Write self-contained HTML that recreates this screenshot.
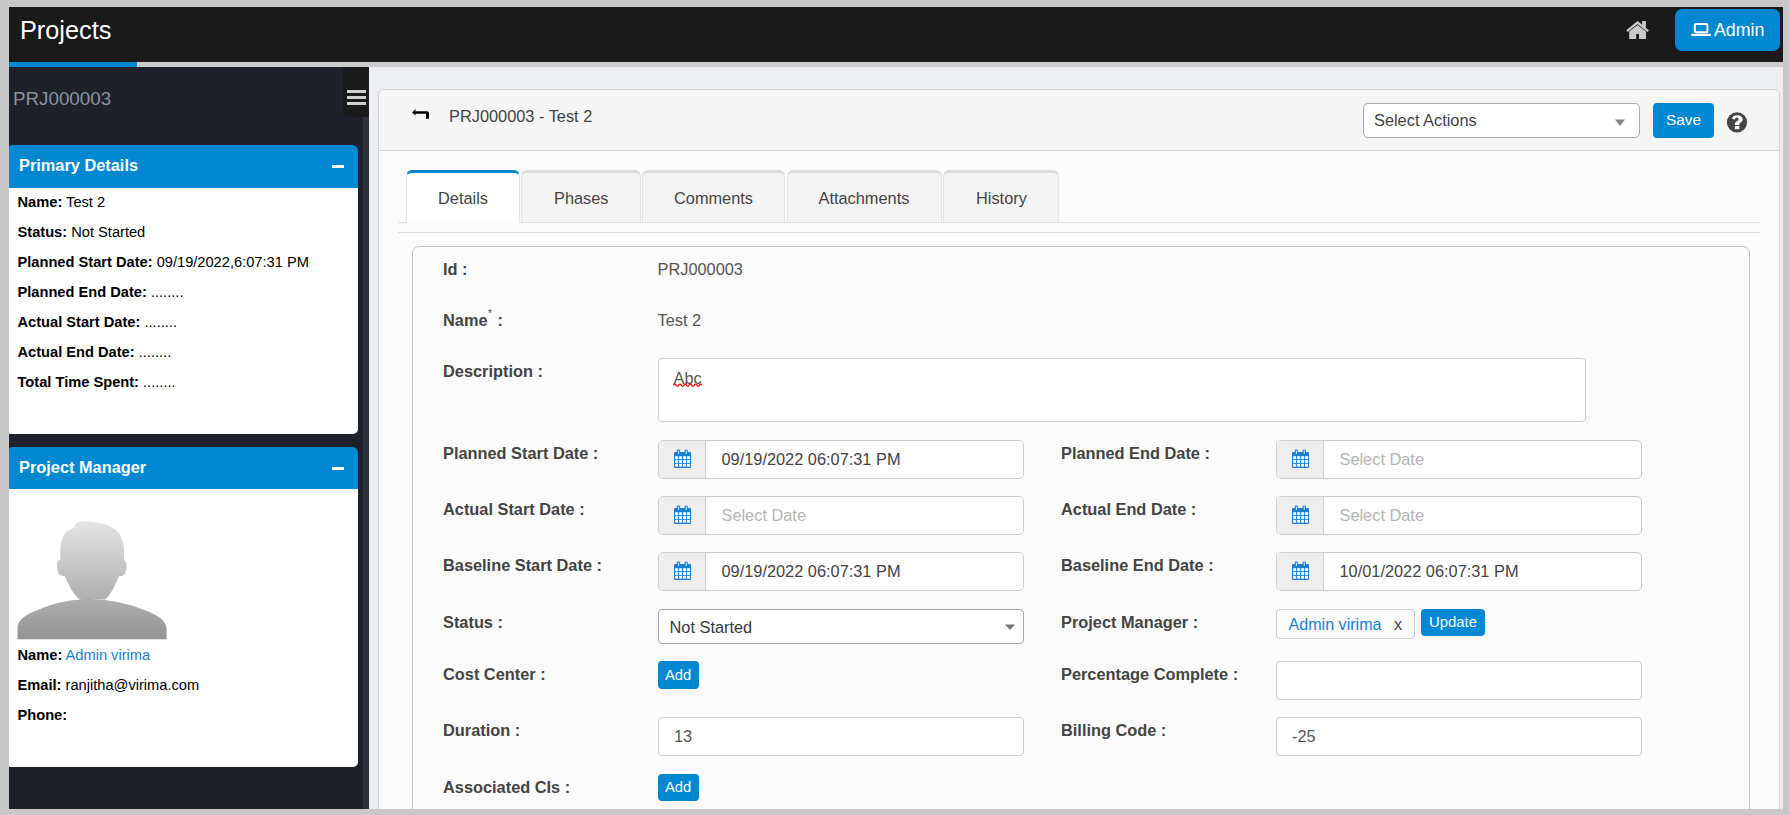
<!DOCTYPE html>
<html><head><meta charset="utf-8">
<style>
*{box-sizing:border-box;margin:0;padding:0}
html,body{width:1789px;height:815px;overflow:hidden;background:#c8c8c8;font-family:"Liberation Sans",sans-serif}
.a{position:absolute}
.t{position:absolute;white-space:nowrap;line-height:1}
.inp{position:absolute;background:#fff;border:1px solid #cdcdcd;border-radius:4px}
.btn{position:absolute;background:#0288d1}
.tab{position:absolute;top:170px;height:52px;background:#f4f4f4;border-top:3px solid #dcdcdc;border-left:1px solid #e6e6e6;border-right:1px solid #e6e6e6;border-radius:6px 6px 0 0}
.dg{position:absolute;height:39px;width:366px;background:#fff;border:1px solid #cdcdcd;border-radius:5px;overflow:hidden}
.dg .ad{position:absolute;left:0;top:0;width:47px;height:37px;background:#eeeeee;border-right:1px solid #cdcdcd}
.dg svg{position:absolute;left:15px;top:8px}
</style></head><body>
<div class="a" style="left:9px;top:7px;width:1774px;height:55px;background:#1a1a1a"></div>
<div class="t" style="left:20px;top:18px;font-size:25.3px;color:#fff;">Projects</div>
<svg class="a" style="left:1620px;top:15px" width="40" height="30" viewBox="0 0 40 30">
<polyline points="7,16.2 17.5,7.6 28.2,16.2" fill="none" stroke="#c8c8c8" stroke-width="2.3"/>
<rect x="22.1" y="6" width="3.8" height="6.5" fill="#c8c8c8"/>
<polygon points="9.2,16.6 17.5,10 26,16.6 26,24 19,24 19,19 16.2,19 16.2,24 9.2,24" fill="#c8c8c8"/>
</svg>
<div class="a" style="left:1675px;top:9px;width:105px;height:42px;background:#0288d1;border-radius:7px"></div>
<svg class="a" style="left:1685px;top:15px" width="40" height="30" viewBox="0 0 40 30">
<rect x="9.8" y="8.9" width="12.6" height="8.3" rx="1.2" fill="none" stroke="#fff" stroke-width="2"/>
<rect x="6.1" y="18.8" width="20" height="2.2" rx="1" fill="#fff"/>
</svg>
<div class="t" style="left:1714px;top:22px;font-size:17.8px;color:#fff;">Admin</div>
<div class="a" style="left:9px;top:62px;width:1774px;height:5px;background:#cccccc"></div>
<div class="a" style="left:9px;top:62px;width:128px;height:5px;background:#0288d1"></div>
<div class="a" style="left:9px;top:67px;width:360px;height:742px;background:#1e2129"></div>
<div class="a" style="left:363px;top:67px;width:6px;height:742px;background:#2c2f37"></div>
<div class="a" style="left:343px;top:67px;width:26px;height:50px;background:#1a1a1a;border-bottom-left-radius:6px"></div>
<div class="a" style="left:346.5px;top:89.8px;width:19px;height:3.3px;background:#cfcfcf"></div>
<div class="a" style="left:346.5px;top:95.9px;width:19px;height:3.3px;background:#cfcfcf"></div>
<div class="a" style="left:346.5px;top:101.8px;width:19px;height:3.3px;background:#cfcfcf"></div>
<div class="t" style="left:13px;top:90px;font-size:18.8px;color:#8c929c;">PRJ000003</div>
<div class="a" style="left:9px;top:145px;width:349px;height:43px;background:#0288d1;border-radius:3px 6px 0 0"></div>
<div class="t" style="left:19px;top:157px;font-size:16.35px;color:#fff;font-weight:bold;">Primary Details</div>
<div class="a" style="left:332px;top:165px;width:12px;height:2.5px;background:#fff"></div>
<div class="a" style="left:9px;top:188px;width:349px;height:245.5px;background:#fff;border-radius:0 0 5px 1px"></div>
<div class="t" style="left:17.5px;top:195px;font-size:14.65px;color:#000;"><b>Name:</b> Test 2</div>
<div class="t" style="left:17.5px;top:225px;font-size:14.65px;color:#000;"><b>Status:</b> Not Started</div>
<div class="t" style="left:17.5px;top:255px;font-size:14.65px;color:#000;"><b>Planned Start Date:</b> 09/19/2022,6:07:31 PM</div>
<div class="t" style="left:17.5px;top:285px;font-size:14.65px;color:#000;"><b>Planned End Date:</b> ........</div>
<div class="t" style="left:17.5px;top:315px;font-size:14.65px;color:#000;"><b>Actual Start Date:</b> ........</div>
<div class="t" style="left:17.5px;top:345px;font-size:14.65px;color:#000;"><b>Actual End Date:</b> ........</div>
<div class="t" style="left:17.5px;top:375px;font-size:14.65px;color:#000;"><b>Total Time Spent:</b> ........</div>
<div class="a" style="left:9px;top:447px;width:349px;height:42px;background:#0288d1;border-radius:3px 6px 0 0"></div>
<div class="t" style="left:19px;top:459px;font-size:16.35px;color:#fff;font-weight:bold;">Project Manager</div>
<div class="a" style="left:332px;top:467px;width:12px;height:2.5px;background:#fff"></div>
<div class="a" style="left:9px;top:489px;width:349px;height:278px;background:#fff;border-radius:0 0 5px 1px"></div>
<svg class="a" style="left:10px;top:510px" width="170" height="135" viewBox="0 0 1026 815">
<defs><linearGradient id="ag" x1="0" y1="0" x2="0" y2="1"><stop offset="0" stop-color="#e4e4e4"/><stop offset="1" stop-color="#939393"/></linearGradient></defs>
<path fill="url(#ag)" d="M390,95 C400,70 430,65 470,70 C560,75 640,100 670,160 C690,200 690,260 688,300 C705,305 710,360 690,390 C680,400 665,400 658,400 C640,440 610,510 575,540 L420,540 C380,510 350,440 330,400 C300,400 285,380 283,340 C283,310 295,300 305,300 C300,230 305,170 340,130 C355,120 380,120 390,95 Z M45,780 L45,700 C60,640 130,620 200,590 C300,550 380,540 490,540 C600,540 700,560 800,600 C880,630 945,660 945,720 L945,780 Z"/>
</svg>
<div class="t" style="left:17.5px;top:648px;font-size:14.65px;color:#000;"><b>Name:</b> <span style="color:#1a7fcf">Admin virima</span></div>
<div class="t" style="left:17.5px;top:678px;font-size:14.65px;color:#000;"><b>Email:</b> ranjitha@virima.com</div>
<div class="t" style="left:17.5px;top:708px;font-size:14.65px;color:#000;"><b>Phone:</b></div>
<div class="a" style="left:369px;top:67px;width:1414px;height:742px;background:#eceef1"></div>
<div class="a" style="left:378px;top:89px;width:1402px;height:740px;background:#fbfbfb;border:1px solid #d2d2d2;border-radius:6px"></div>
<div class="a" style="left:379px;top:90px;width:1400px;height:61px;background:#f5f5f5;border-bottom:1px solid #d8d8d8;border-radius:5px 5px 0 0"></div>
<svg class="a" style="left:405px;top:100px" width="35" height="28" viewBox="0 0 35 28">
<path d="M7,12.4 L10.5,9.1 L10.5,11.2 L22,11.2 Q24,11.2 24,13.2 L24,18.7 L21,18.7 L21,13.7 L10.5,13.7 L10.5,15.6 Z" fill="#000"/>
</svg>
<div class="t" style="left:449px;top:108px;font-size:16.35px;color:#444;">PRJ000003 - Test 2</div>
<div class="inp" style="left:1363px;top:103px;width:277px;height:35px;border-color:#aaa;border-radius:5px"></div>
<div class="t" style="left:1374px;top:112px;font-size:16.35px;color:#444;">Select Actions</div>
<svg class="a" style="left:1614px;top:119px" width="12" height="8" viewBox="0 0 12 8"><polygon points="1,0.5 11,0.5 6,7" fill="#888"/></svg>
<div class="btn" style="left:1653px;top:103px;width:61px;height:35px;border-radius:4px"></div>
<div class="t" style="left:1666px;top:112px;font-size:15.4px;color:#fff;">Save</div>
<svg class="a" style="left:1720px;top:105px" width="35" height="35" viewBox="0 0 35 35">
<circle cx="17" cy="17.3" r="10.1" fill="#454545"/>
<path d="M11.9,13.6 C12.4,11.3 14.4,10.2 17.1,10.2 C20.3,10.2 22.7,12 22.7,14.6 C22.7,17.2 19.3,17.8 19.3,19.2 L19.3,19.9 L14.9,19.9 L14.9,18.9 C14.9,16.5 18.6,16 18.6,14.5 C18.6,13.4 17.9,12.6 17,12.6 C16,12.6 15.2,13.3 14.6,14.8 Z" fill="#fff"/>
<rect x="14.9" y="21" width="4.4" height="3.2" fill="#fff"/>
</svg>
<div class="a" style="left:398px;top:222px;width:1362px;height:1px;background:#e3e3e3"></div>
<div class="a" style="left:398px;top:232px;width:1362px;height:1px;background:#dedede"></div>
<div class="tab" style="left:406px;width:114px;background:#fff;border-top-color:#0288d1;height:53px"></div>
<div class="t" style="left:438px;top:190px;font-size:16.35px;color:#444;">Details</div>
<div class="tab" style="left:521px;width:120px;"></div>
<div class="t" style="left:554px;top:190px;font-size:16.35px;color:#444;">Phases</div>
<div class="tab" style="left:642px;width:143px;"></div>
<div class="t" style="left:674px;top:190px;font-size:16.35px;color:#444;">Comments</div>
<div class="tab" style="left:787px;width:155px;"></div>
<div class="t" style="left:818.5px;top:190px;font-size:16.35px;color:#444;">Attachments</div>
<div class="tab" style="left:943px;width:116px;"></div>
<div class="t" style="left:976px;top:190px;font-size:16.35px;color:#444;">History</div>
<div class="a" style="left:412px;top:246px;width:1338px;height:600px;border:1px solid #c2c2c2;border-radius:7px;background:#fbfbfb"></div>
<div class="t" style="left:443px;top:261px;font-size:16.35px;color:#444;font-weight:bold;">Id :</div>
<div class="t" style="left:443px;top:312px;font-size:16.35px;color:#444;font-weight:bold;">Name<sup style="font-size:10px;font-weight:normal;position:relative;top:-3px;margin-left:0.5px;margin-right:1px">*</sup> :</div>
<div class="t" style="left:443px;top:363px;font-size:16.35px;color:#444;font-weight:bold;">Description :</div>
<div class="t" style="left:443px;top:445px;font-size:16.35px;color:#444;font-weight:bold;">Planned Start Date :</div>
<div class="t" style="left:443px;top:501px;font-size:16.35px;color:#444;font-weight:bold;">Actual Start Date :</div>
<div class="t" style="left:443px;top:557px;font-size:16.35px;color:#444;font-weight:bold;">Baseline Start Date :</div>
<div class="t" style="left:443px;top:614px;font-size:16.35px;color:#444;font-weight:bold;">Status :</div>
<div class="t" style="left:443px;top:666px;font-size:16.35px;color:#444;font-weight:bold;">Cost Center :</div>
<div class="t" style="left:443px;top:722px;font-size:16.35px;color:#444;font-weight:bold;">Duration :</div>
<div class="t" style="left:443px;top:779px;font-size:16.35px;color:#444;font-weight:bold;">Associated CIs :</div>
<div class="t" style="left:1061px;top:445px;font-size:16.35px;color:#444;font-weight:bold;">Planned End Date :</div>
<div class="t" style="left:1061px;top:501px;font-size:16.35px;color:#444;font-weight:bold;">Actual End Date :</div>
<div class="t" style="left:1061px;top:557px;font-size:16.35px;color:#444;font-weight:bold;">Baseline End Date :</div>
<div class="t" style="left:1061px;top:614px;font-size:16.35px;color:#444;font-weight:bold;">Project Manager :</div>
<div class="t" style="left:1061px;top:666px;font-size:16.35px;color:#444;font-weight:bold;">Percentage Complete :</div>
<div class="t" style="left:1061px;top:722px;font-size:16.35px;color:#444;font-weight:bold;">Billing Code :</div>
<div class="t" style="left:657.5px;top:261px;font-size:16.35px;color:#555;">PRJ000003</div>
<div class="t" style="left:657.5px;top:312px;font-size:16.35px;color:#555;">Test 2</div>
<div class="inp" style="left:658px;top:358px;width:928px;height:64px"></div>
<div class="t" style="left:673.5px;top:370px;font-size:16.35px;color:#555;">Abc</div>
<svg class="a" style="left:673px;top:383px" width="32" height="6" viewBox="0 0 32 6"><path d="M0.5,2.3 Q1.8,0.0 3.1,2.3 Q4.4,4.6 5.7,2.3 Q7.0,0.0 8.3,2.3 Q9.6,4.6 10.9,2.3 Q12.2,0.0 13.5,2.3 Q14.8,4.6 16.1,2.3 Q17.4,0.0 18.7,2.3 Q20.0,4.6 21.3,2.3 Q22.6,0.0 23.9,2.3 Q25.2,4.6 26.5,2.3 Q27.8,0.0 29.1,2.3" fill="none" stroke="#f00" stroke-width="1.3"/></svg>
<div class="dg" style="left:658px;top:440px"><div class="ad"></div><svg width="17" height="19" viewBox="0 -1 17 19"><path fill="#1a7fcf" d="M0,3.2 Q0,2 1.2,2 L15.8,2 Q17,2 17,3.2 L17,16.7 Q17,17.9 15.8,17.9 L1.2,17.9 Q0,17.9 0,16.7 Z"/><rect x="2.8" y="-0.5" width="3.3" height="5" rx="1.3" fill="#1a7fcf"/><rect x="10.6" y="-0.5" width="3.3" height="5" rx="1.3" fill="#1a7fcf"/><rect x="3.9" y="0.4" width="1.2" height="3.4" fill="#c9def2"/><rect x="11.7" y="0.4" width="1.2" height="3.4" fill="#c9def2"/><g fill="#f6f9fd"><rect x="1.1" y="6.2" width="3.0" height="2.9"/><rect x="5.1" y="6.2" width="3.0" height="2.9"/><rect x="9.1" y="6.2" width="3.0" height="2.9"/><rect x="13.0" y="6.2" width="3.0" height="2.9"/><rect x="1.1" y="10.0" width="3.0" height="2.9"/><rect x="5.1" y="10.0" width="3.0" height="2.9"/><rect x="9.1" y="10.0" width="3.0" height="2.9"/><rect x="13.0" y="10.0" width="3.0" height="2.9"/><rect x="1.1" y="13.8" width="3.0" height="2.9"/><rect x="5.1" y="13.8" width="3.0" height="2.9"/><rect x="9.1" y="13.8" width="3.0" height="2.9"/><rect x="13.0" y="13.8" width="3.0" height="2.9"/></g></svg></div>
<div class="t" style="left:721.5px;top:451px;font-size:16.35px;color:#444;">09/19/2022 06:07:31 PM</div>
<div class="dg" style="left:658px;top:496px"><div class="ad"></div><svg width="17" height="19" viewBox="0 -1 17 19"><path fill="#1a7fcf" d="M0,3.2 Q0,2 1.2,2 L15.8,2 Q17,2 17,3.2 L17,16.7 Q17,17.9 15.8,17.9 L1.2,17.9 Q0,17.9 0,16.7 Z"/><rect x="2.8" y="-0.5" width="3.3" height="5" rx="1.3" fill="#1a7fcf"/><rect x="10.6" y="-0.5" width="3.3" height="5" rx="1.3" fill="#1a7fcf"/><rect x="3.9" y="0.4" width="1.2" height="3.4" fill="#c9def2"/><rect x="11.7" y="0.4" width="1.2" height="3.4" fill="#c9def2"/><g fill="#f6f9fd"><rect x="1.1" y="6.2" width="3.0" height="2.9"/><rect x="5.1" y="6.2" width="3.0" height="2.9"/><rect x="9.1" y="6.2" width="3.0" height="2.9"/><rect x="13.0" y="6.2" width="3.0" height="2.9"/><rect x="1.1" y="10.0" width="3.0" height="2.9"/><rect x="5.1" y="10.0" width="3.0" height="2.9"/><rect x="9.1" y="10.0" width="3.0" height="2.9"/><rect x="13.0" y="10.0" width="3.0" height="2.9"/><rect x="1.1" y="13.8" width="3.0" height="2.9"/><rect x="5.1" y="13.8" width="3.0" height="2.9"/><rect x="9.1" y="13.8" width="3.0" height="2.9"/><rect x="13.0" y="13.8" width="3.0" height="2.9"/></g></svg></div>
<div class="t" style="left:721.5px;top:507px;font-size:16.35px;color:#b5b5b5;">Select Date</div>
<div class="dg" style="left:658px;top:552px"><div class="ad"></div><svg width="17" height="19" viewBox="0 -1 17 19"><path fill="#1a7fcf" d="M0,3.2 Q0,2 1.2,2 L15.8,2 Q17,2 17,3.2 L17,16.7 Q17,17.9 15.8,17.9 L1.2,17.9 Q0,17.9 0,16.7 Z"/><rect x="2.8" y="-0.5" width="3.3" height="5" rx="1.3" fill="#1a7fcf"/><rect x="10.6" y="-0.5" width="3.3" height="5" rx="1.3" fill="#1a7fcf"/><rect x="3.9" y="0.4" width="1.2" height="3.4" fill="#c9def2"/><rect x="11.7" y="0.4" width="1.2" height="3.4" fill="#c9def2"/><g fill="#f6f9fd"><rect x="1.1" y="6.2" width="3.0" height="2.9"/><rect x="5.1" y="6.2" width="3.0" height="2.9"/><rect x="9.1" y="6.2" width="3.0" height="2.9"/><rect x="13.0" y="6.2" width="3.0" height="2.9"/><rect x="1.1" y="10.0" width="3.0" height="2.9"/><rect x="5.1" y="10.0" width="3.0" height="2.9"/><rect x="9.1" y="10.0" width="3.0" height="2.9"/><rect x="13.0" y="10.0" width="3.0" height="2.9"/><rect x="1.1" y="13.8" width="3.0" height="2.9"/><rect x="5.1" y="13.8" width="3.0" height="2.9"/><rect x="9.1" y="13.8" width="3.0" height="2.9"/><rect x="13.0" y="13.8" width="3.0" height="2.9"/></g></svg></div>
<div class="t" style="left:721.5px;top:563px;font-size:16.35px;color:#444;">09/19/2022 06:07:31 PM</div>
<div class="dg" style="left:1276px;top:440px"><div class="ad"></div><svg width="17" height="19" viewBox="0 -1 17 19"><path fill="#1a7fcf" d="M0,3.2 Q0,2 1.2,2 L15.8,2 Q17,2 17,3.2 L17,16.7 Q17,17.9 15.8,17.9 L1.2,17.9 Q0,17.9 0,16.7 Z"/><rect x="2.8" y="-0.5" width="3.3" height="5" rx="1.3" fill="#1a7fcf"/><rect x="10.6" y="-0.5" width="3.3" height="5" rx="1.3" fill="#1a7fcf"/><rect x="3.9" y="0.4" width="1.2" height="3.4" fill="#c9def2"/><rect x="11.7" y="0.4" width="1.2" height="3.4" fill="#c9def2"/><g fill="#f6f9fd"><rect x="1.1" y="6.2" width="3.0" height="2.9"/><rect x="5.1" y="6.2" width="3.0" height="2.9"/><rect x="9.1" y="6.2" width="3.0" height="2.9"/><rect x="13.0" y="6.2" width="3.0" height="2.9"/><rect x="1.1" y="10.0" width="3.0" height="2.9"/><rect x="5.1" y="10.0" width="3.0" height="2.9"/><rect x="9.1" y="10.0" width="3.0" height="2.9"/><rect x="13.0" y="10.0" width="3.0" height="2.9"/><rect x="1.1" y="13.8" width="3.0" height="2.9"/><rect x="5.1" y="13.8" width="3.0" height="2.9"/><rect x="9.1" y="13.8" width="3.0" height="2.9"/><rect x="13.0" y="13.8" width="3.0" height="2.9"/></g></svg></div>
<div class="t" style="left:1339.5px;top:451px;font-size:16.35px;color:#b5b5b5;">Select Date</div>
<div class="dg" style="left:1276px;top:496px"><div class="ad"></div><svg width="17" height="19" viewBox="0 -1 17 19"><path fill="#1a7fcf" d="M0,3.2 Q0,2 1.2,2 L15.8,2 Q17,2 17,3.2 L17,16.7 Q17,17.9 15.8,17.9 L1.2,17.9 Q0,17.9 0,16.7 Z"/><rect x="2.8" y="-0.5" width="3.3" height="5" rx="1.3" fill="#1a7fcf"/><rect x="10.6" y="-0.5" width="3.3" height="5" rx="1.3" fill="#1a7fcf"/><rect x="3.9" y="0.4" width="1.2" height="3.4" fill="#c9def2"/><rect x="11.7" y="0.4" width="1.2" height="3.4" fill="#c9def2"/><g fill="#f6f9fd"><rect x="1.1" y="6.2" width="3.0" height="2.9"/><rect x="5.1" y="6.2" width="3.0" height="2.9"/><rect x="9.1" y="6.2" width="3.0" height="2.9"/><rect x="13.0" y="6.2" width="3.0" height="2.9"/><rect x="1.1" y="10.0" width="3.0" height="2.9"/><rect x="5.1" y="10.0" width="3.0" height="2.9"/><rect x="9.1" y="10.0" width="3.0" height="2.9"/><rect x="13.0" y="10.0" width="3.0" height="2.9"/><rect x="1.1" y="13.8" width="3.0" height="2.9"/><rect x="5.1" y="13.8" width="3.0" height="2.9"/><rect x="9.1" y="13.8" width="3.0" height="2.9"/><rect x="13.0" y="13.8" width="3.0" height="2.9"/></g></svg></div>
<div class="t" style="left:1339.5px;top:507px;font-size:16.35px;color:#b5b5b5;">Select Date</div>
<div class="dg" style="left:1276px;top:552px"><div class="ad"></div><svg width="17" height="19" viewBox="0 -1 17 19"><path fill="#1a7fcf" d="M0,3.2 Q0,2 1.2,2 L15.8,2 Q17,2 17,3.2 L17,16.7 Q17,17.9 15.8,17.9 L1.2,17.9 Q0,17.9 0,16.7 Z"/><rect x="2.8" y="-0.5" width="3.3" height="5" rx="1.3" fill="#1a7fcf"/><rect x="10.6" y="-0.5" width="3.3" height="5" rx="1.3" fill="#1a7fcf"/><rect x="3.9" y="0.4" width="1.2" height="3.4" fill="#c9def2"/><rect x="11.7" y="0.4" width="1.2" height="3.4" fill="#c9def2"/><g fill="#f6f9fd"><rect x="1.1" y="6.2" width="3.0" height="2.9"/><rect x="5.1" y="6.2" width="3.0" height="2.9"/><rect x="9.1" y="6.2" width="3.0" height="2.9"/><rect x="13.0" y="6.2" width="3.0" height="2.9"/><rect x="1.1" y="10.0" width="3.0" height="2.9"/><rect x="5.1" y="10.0" width="3.0" height="2.9"/><rect x="9.1" y="10.0" width="3.0" height="2.9"/><rect x="13.0" y="10.0" width="3.0" height="2.9"/><rect x="1.1" y="13.8" width="3.0" height="2.9"/><rect x="5.1" y="13.8" width="3.0" height="2.9"/><rect x="9.1" y="13.8" width="3.0" height="2.9"/><rect x="13.0" y="13.8" width="3.0" height="2.9"/></g></svg></div>
<div class="t" style="left:1339.5px;top:563px;font-size:16.35px;color:#444;">10/01/2022 06:07:31 PM</div>
<div class="inp" style="left:658px;top:609px;width:366px;height:35px;border-color:#a5a5a5;border-radius:4px"></div>
<div class="t" style="left:669.5px;top:619px;font-size:16.35px;color:#3a3a3a;">Not Started</div>
<svg class="a" style="left:1004px;top:624px" width="12" height="7" viewBox="0 0 12 7"><polygon points="1,0.5 11,0.5 6,6" fill="#777"/></svg>
<div class="btn" style="left:658px;top:661px;width:41px;height:28px;border-radius:4px"></div>
<div class="t" style="left:665px;top:668px;font-size:14.8px;color:#fff;">Add</div>
<div class="btn" style="left:658px;top:774px;width:41px;height:27px;border-radius:4px"></div>
<div class="t" style="left:665px;top:780px;font-size:14.8px;color:#fff;">Add</div>
<div class="inp" style="left:658px;top:717px;width:366px;height:39px"></div>
<div class="t" style="left:674px;top:728px;font-size:16.35px;color:#555;">13</div>
<div class="inp" style="left:1276px;top:609px;width:139px;height:30px;background:#fbfbfb"></div>
<div class="t" style="left:1288.5px;top:616px;font-size:16.1px;color:#1a7fcf;">Admin virima</div>
<div class="t" style="left:1394px;top:616px;font-size:16.35px;color:#444;">x</div>
<div class="btn" style="left:1421px;top:609px;width:64px;height:27px;border-radius:4px"></div>
<div class="t" style="left:1429px;top:615px;font-size:14.9px;color:#fff;">Update</div>
<div class="inp" style="left:1276px;top:661px;width:366px;height:39px"></div>
<div class="inp" style="left:1276px;top:717px;width:366px;height:39px"></div>
<div class="t" style="left:1292px;top:728px;font-size:16.35px;color:#555;">-25</div>
<div class="a" style="left:0;top:809px;width:1789px;height:6px;background:#c8c8c8"></div>
<div class="a" style="left:1783px;top:0;width:6px;height:815px;background:#c8c8c8"></div>
</body></html>
